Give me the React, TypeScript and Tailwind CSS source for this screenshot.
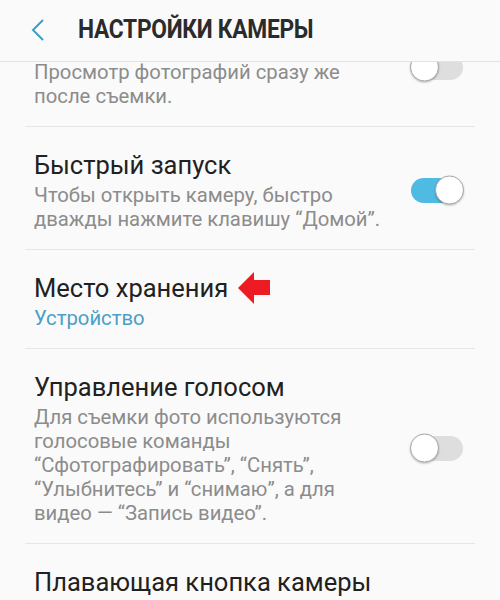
import React from 'react';

interface SettingItem {
  title: string;
  subtitle: string;
  toggle?: 'on' | 'off';
  accent?: boolean;
  arrow?: boolean;
}

const ITEMS: SettingItem[] = [
  { title: 'Просмотр фото', subtitle: 'Просмотр фотографий сразу же\nпосле съемки.', toggle: 'off' },
  {
    title: 'Быстрый запуск',
    subtitle: 'Чтобы открыть камеру, быстро\nдважды нажмите клавишу “Домой”.',
    toggle: 'on',
  },
  { title: 'Место хранения', subtitle: 'Устройство', accent: true, arrow: true },
  {
    title: 'Управление голосом',
    subtitle:
      'Для съемки фото используются\nголосовые команды\n“Сфотографировать”, “Снять”,\n“Улыбнитесь” и “снимаю”, а для\nвидео — “Запись видео”.',
    toggle: 'off',
  },
  { title: 'Плавающая кнопка камеры', subtitle: 'Добавление кнопки камеры, которую\nможно переместить.' },
];

const Toggle = ({ on }: { on: boolean }) => (
  <div
    className={`relative w-[52px] h-[25px] rounded-full shrink-0 ${on ? 'bg-[#4fbbe3]' : 'bg-[#dedede]'}`}
  >
    <div
      className={`absolute top-1/2 -translate-y-1/2 w-[29px] h-[29px] rounded-full bg-white border border-[#a8a8a8] shadow-[0_1px_2px_rgba(0,0,0,0.25)] ${
        on ? 'right-[-1px]' : 'left-[-1px]'
      }`}
    />
  </div>
);

const RedArrow = () => (
  <svg width="32" height="32" viewBox="0 0 32 32" className="ml-[10px] shrink-0">
    <polygon points="0,16 16,0 16,8 32,8 32,23 16,23 16,32" fill="#ed1c24" />
  </svg>
);

export default function App() {
  return (
    <div
      className="w-[500px] h-[600px] overflow-hidden bg-[#fafafa] flex flex-col"
      style={{ fontFamily: 'Roboto, "Noto Sans", sans-serif' }}
    >
      {/* Header */}
      <div className="h-[62px] shrink-0 bg-[#fafafa] border-b border-[#e3e3e3] flex items-center">
        <svg width="14" height="24" viewBox="0 0 14 24" className="ml-[31px] mt-[-2px] shrink-0">
          <path d="M12 2 L2 12 L12 22" fill="none" stroke="#3d9dc8" strokeWidth="2" />
        </svg>
        <h1 className="ml-[33px] text-[25px] font-bold text-[#2b2b2b] tracking-[-0.3px] origin-left scale-x-[0.91] whitespace-nowrap mt-[-2px]">
          НАСТРОЙКИ КАМЕРЫ
        </h1>
      </div>

      {/* List, scrolled a little */}
      <div className="flex-1 overflow-hidden">
        <div className="-mt-[58px]">
          {ITEMS.map((item, i) => (
            <div key={i} className="mx-[25px] border-b border-[#e6e6e6] flex items-center pl-[9px] pr-[12px] pt-[22px] pb-[18px]">
              <div className="flex-1">
                <div className="flex items-center">
                  <div className="text-[25.5px] leading-[32px] text-[#212121]">{item.title}</div>
                  {item.arrow && <RedArrow />}
                </div>
                <div
                  className={`mt-[2px] text-[20.3px] leading-[24px] whitespace-pre-line ${
                    item.accent ? 'text-[#4a9fc8]' : 'text-[#8c8c8c]'
                  }`}
                >
                  {item.subtitle}
                </div>
              </div>
              {item.toggle && <Toggle on={item.toggle === 'on'} />}
            </div>
          ))}
        </div>
      </div>
    </div>
  );
}
